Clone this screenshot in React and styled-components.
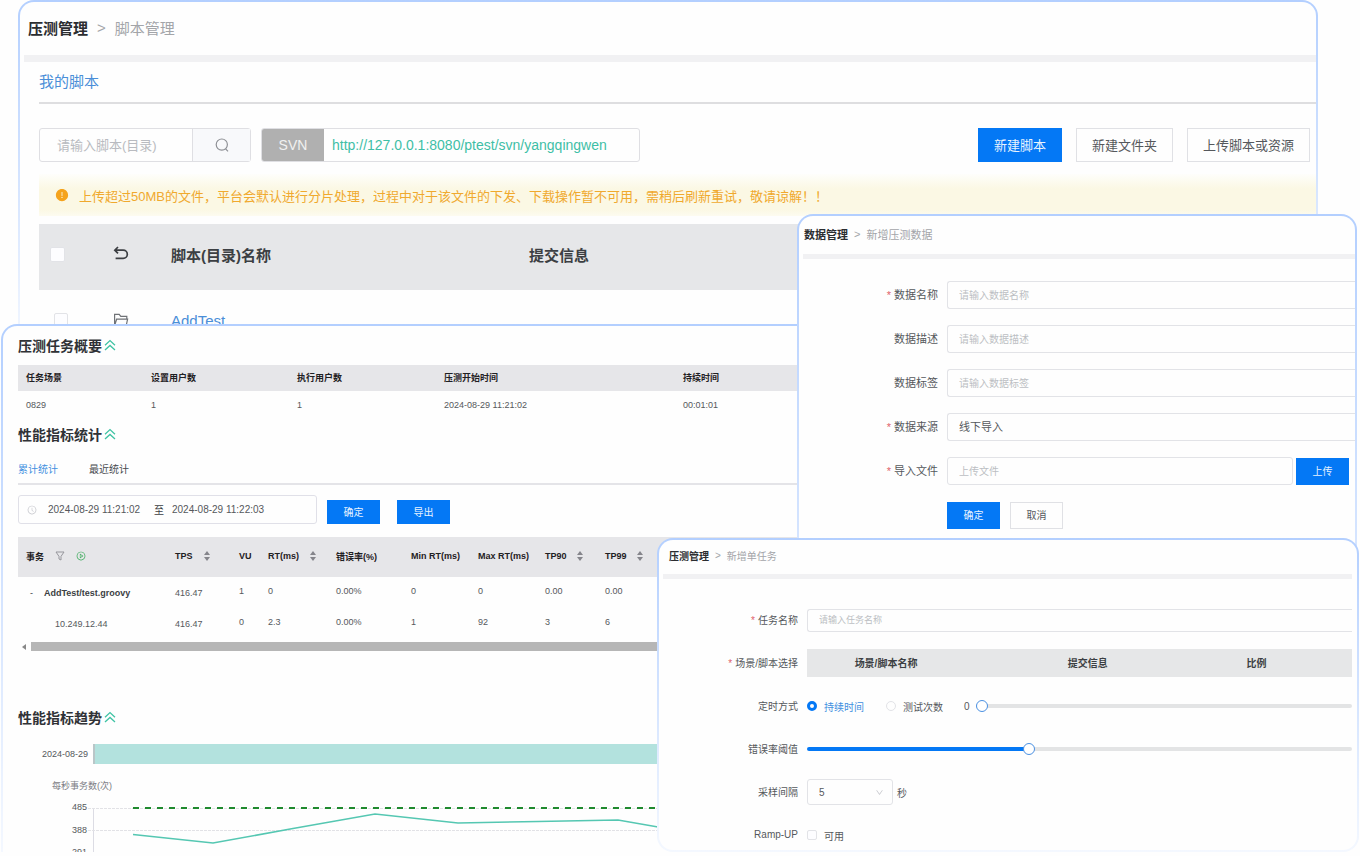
import React, { useState } from 'react'
import styled, { createGlobalStyle } from 'styled-components'
import {
    AiFillExclamationCircle,
    AiOutlineClockCircle,
    AiOutlineDown,
    AiOutlinePlayCircle,
} from 'react-icons/ai'

const summary = [
    { title: '任务场景', value: '0829', width: 125 },
    { title: '设置用户数', value: '1', width: 146 },
    { title: '执行用户数', value: '1', width: 147 },
    { title: '压测开始时间', value: '2024-08-29 11:21:02', width: 239 },
    { title: '持续时间', value: '00:01:01' },
]

const metricColumns = [
    { title: 'TPS', width: 64, sort: 11 },
    { title: 'VU', width: 29 },
    { title: 'RT(ms)', width: 68, sort: 11 },
    { title: '错误率(%)', width: 75 },
    { title: 'Min RT(ms)', width: 67 },
    { title: 'Max RT(ms)', width: 67 },
    { title: 'TP90', width: 60, sort: 10 },
    { title: 'TP99', sort: 10 },
]

const metricRows = [
    { name: 'AddTest/test.groovy', parent: true, values: ['416.47', '1', '0', '0.00%', '0', '0', '0.00', '0.00'] },
    { name: '10.249.12.44', values: ['416.47', '0', '2.3', '0.00%', '1', '92', '3', '6'] },
]

export default function App() {
    return (
        <>
            <GlobalStyle />
            <Stage>
                <ScriptPanel />
                <ReportPanel />
                <DataPanel />
                <TaskPanel />
            </Stage>
        </>
    )
}

function ScriptPanel() {
    return (
        <ScriptWindow>
            <Crumbs $size={15} $height={53} $pad={8}>
                <strong>压测管理</strong>
                <span>&gt;</span>
                <em>脚本管理</em>
            </Crumbs>
            <Band $height={7} />
            <ScriptTitle>
                <a href="#scripts">我的脚本</a>
            </ScriptTitle>
            <Toolbar>
                <SearchBox>
                    <input aria-label="脚本" placeholder="请输入脚本(目录)" />
                    <button type="button" aria-label="搜索">
                        <SearchIcon />
                    </button>
                </SearchBox>
                <SvnBox>
                    <label htmlFor="svn">SVN</label>
                    <input id="svn" defaultValue="http://127.0.0.1:8080/ptest/svn/yangqingwen" />
                </SvnBox>
                <ToolbarActions>
                    <Button $primary $large>新建脚本</Button>
                    <Button $large>新建文件夹</Button>
                    <Button $large>上传脚本或资源</Button>
                </ToolbarActions>
            </Toolbar>
            <Notice>
                <AiFillExclamationCircle />
                上传超过50MB的文件，平台会默认进行分片处理，过程中对于该文件的下发、下载操作暂不可用，需稍后刷新重试，敬请谅解！！
            </Notice>
            <ScriptTable>
                <colgroup>
                    <col width="74" />
                    <col width="58" />
                    <col width="358" />
                    <col />
                </colgroup>
                <thead>
                    <tr>
                        <th><CheckBox aria-label="全选" $size={15} /></th>
                        <th><BackIcon /></th>
                        <th>脚本(目录)名称</th>
                        <th>提交信息</th>
                    </tr>
                </thead>
                <tbody>
                    <tr>
                        <td><CheckBox aria-label="选择 AddTest" $size={14} /></td>
                        <td><FolderIcon /></td>
                        <td><a href="#addtest">AddTest</a></td>
                        <td />
                    </tr>
                </tbody>
            </ScriptTable>
        </ScriptWindow>
    )
}

function ReportPanel() {
    return (
        <ReportWindow>
            <SectionTitle $height={39}>压测任务概要 <CollapseIcon /></SectionTitle>
            <ReportTable $head={26} $row={28}>
                <colgroup>
                    {summary.map((c) => <col key={c.title} width={c.width} />)}
                </colgroup>
                <thead>
                    <tr>{summary.map((c) => <th key={c.title}>{c.title}</th>)}</tr>
                </thead>
                <tbody>
                    <tr>{summary.map((c) => <td key={c.title}>{c.value}</td>)}</tr>
                </tbody>
            </ReportTable>
            <SectionTitle $height={32}>性能指标统计 <CollapseIcon /></SectionTitle>
            <Tabs>
                <Tab type="button" $active>累计统计</Tab>
                <Tab type="button">最近统计</Tab>
            </Tabs>
            <FilterRow>
                <DateRange>
                    <AiOutlineClockCircle />
                    <input aria-label="开始时间" defaultValue="2024-08-29 11:21:02" />
                    <span>至</span>
                    <input aria-label="结束时间" defaultValue="2024-08-29 11:22:03" />
                </DateRange>
                <Button $primary $short>确定</Button>
                <Button $primary $short $spaced>导出</Button>
            </FilterRow>
            <ReportTable $head={40} $row={31}>
                <colgroup>
                    <col width="149" />
                    {metricColumns.map((c) => <col key={c.title} width={c.width} />)}
                </colgroup>
                <thead>
                    <tr>
                        <th>
                            <HeadCell $gap={11}>
                                事务
                                <FilterIcon />
                                <AiOutlinePlayCircle size={10} color="#3dab5c" />
                            </HeadCell>
                        </th>
                        {metricColumns.map((c) => (
                            <th key={c.title}>
                                <HeadCell $gap={c.sort}>
                                    {c.title}
                                    {c.sort && <SortIcon />}
                                </HeadCell>
                            </th>
                        ))}
                    </tr>
                </thead>
                <tbody>
                    {metricRows.map((row) => (
                        <tr key={row.name}>
                            <NameCell $parent={row.parent}>
                                {row.parent && <button type="button">-</button>}
                                {row.name}
                            </NameCell>
                            {row.values.map((v, i) => (
                                <MetricCell key={metricColumns[i].title} $low={i === 0}>{v}</MetricCell>
                            ))}
                        </tr>
                    ))}
                </tbody>
            </ReportTable>
            <ScrollBar>
                <svg width="4" height="6" viewBox="0 0 4 6"><path d="M4 0v6L0 3z" fill="#888" /></svg>
                <i />
            </ScrollBar>
            <TrendTitle $height={32}>性能指标趋势 <CollapseIcon /></TrendTitle>
            <Timeline>
                <span>2024-08-29</span>
                <i />
            </Timeline>
            <TrendChart />
        </ReportWindow>
    )
}

function DataPanel() {
    return (
        <DataWindow>
            <Crumbs $size={11} $height={38} $pad={5}>
                <strong>数据管理</strong>
                <span>&gt;</span>
                <em>新增压测数据</em>
            </Crumbs>
            <Band $height={5} />
            <Form $size={11} $top={22} $gap={16}>
                <Label htmlFor="dataName" $required>数据名称</Label>
                <Input id="dataName" placeholder="请输入数据名称" />
                <Label htmlFor="dataDesc">数据描述</Label>
                <Input id="dataDesc" placeholder="请输入数据描述" />
                <Label htmlFor="dataTag">数据标签</Label>
                <Input id="dataTag" placeholder="请输入数据标签" />
                <Label htmlFor="dataSource" $required>数据来源</Label>
                <WideSelect id="dataSource">
                    <option>线下导入</option>
                </WideSelect>
                <Label htmlFor="dataFile" $required>导入文件</Label>
                <UploadRow>
                    <Input id="dataFile" placeholder="上传文件" $closed />
                    <Button type="button" $primary>上传</Button>
                </UploadRow>
                <span />
                <FormActions>
                    <Button type="button" $primary>确定</Button>
                    <Button type="button">取消</Button>
                </FormActions>
            </Form>
        </DataWindow>
    )
}

function TaskPanel() {
    const [duration, setDuration] = useState(0)
    const [errorRate, setErrorRate] = useState(40.5)

    return (
        <TaskWindow>
            <Crumbs $size={10} $height={34} $pad={10}>
                <strong>压测管理</strong>
                <span>&gt;</span>
                <em>新增单任务</em>
            </Crumbs>
            <Band $height={5} $right={5} />
            <Form $size={10} $top={27} $gap={15} $right={5}>
                <Label htmlFor="taskName" $required>任务名称</Label>
                <Input id="taskName" placeholder="请输入任务名称" $thin />
                <Label as="span" $required>场景/脚本选择</Label>
                <SceneTable>
                    <colgroup>
                        <col width="29%" />
                        <col width="45%" />
                        <col width="17%" />
                        <col />
                    </colgroup>
                    <thead>
                        <tr>
                            <th>场景/脚本名称</th>
                            <th>提交信息</th>
                            <th>比例</th>
                            <th />
                        </tr>
                    </thead>
                </SceneTable>
                <Label as="span">定时方式</Label>
                <TimingRow>
                    <Choice $active>
                        <Radio name="timing" defaultChecked />
                        持续时间
                    </Choice>
                    <Choice>
                        <Radio name="timing" />
                        测试次数
                    </Choice>
                    <output>{duration}</output>
                    <Slider
                        aria-label="持续时间"
                        value={duration}
                        $value={duration}
                        onChange={(e) => setDuration(Number(e.target.value))}
                    />
                </TimingRow>
                <Label htmlFor="errorRate">错误率阈值</Label>
                <Slider
                    id="errorRate"
                    step="0.5"
                    value={errorRate}
                    $value={errorRate}
                    onChange={(e) => setErrorRate(Number(e.target.value))}
                />
                <Label htmlFor="interval">采样间隔</Label>
                <IntervalRow>
                    <SelectBox>
                        <select id="interval">
                            <option>5</option>
                        </select>
                        <AiOutlineDown size={9} />
                    </SelectBox>
                    秒
                </IntervalRow>
                <Label as="span">Ramp-UP</Label>
                <Choice>
                    <CheckBox $size={10} />
                    可用
                </Choice>
            </Form>
        </TaskWindow>
    )
}

function SearchIcon() {
    return (
        <svg width="16" height="16" viewBox="0 0 16 16" fill="none" stroke="currentColor" strokeWidth="1.2">
            <circle cx="7.8" cy="7.6" r="5.6" />
            <path d="m11.6 11.8 2.4 2.6" />
        </svg>
    )
}

function FolderIcon() {
    return (
        <svg width="16" height="16" viewBox="0 0 16 16" fill="none" stroke="#6f7276" strokeWidth="1.2">
            <path d="M1.6 13.6V2.4h4.6l1.6 2h6v2.8M1.6 13.6 3.6 7.2h11l-1.4 6.4z" />
        </svg>
    )
}

function CollapseIcon() {
    return (
        <svg width="12" height="12" viewBox="0 0 12 12" fill="none" stroke="#3fc3a4" strokeWidth="1.3">
            <path d="M1 6.2 6 1.6l5 4.6M1 11 6 6.4 11 11" />
        </svg>
    )
}

function BackIcon() {
    return (
        <svg width="16" height="16" viewBox="0 0 16 16" fill="none" stroke="#3c3f43" strokeWidth="1.7">
            <path d="M5 1 1.8 4.2 5 7.4M2 4.2h8.2a4 4 0 0 1 0 8.2H2.6" />
        </svg>
    )
}

function FilterIcon() {
    return (
        <svg width="10" height="10" viewBox="0 0 10 10" fill="none" stroke="#96969c">
            <path d="M1 1h8L6 5.4V9L4 8V5.4z" />
        </svg>
    )
}

function SortIcon() {
    return (
        <svg width="6" height="10" viewBox="0 0 6 10" fill="#85858b">
            <path d="M3 0 6 4H0zM3 10 0 6h6z" />
        </svg>
    )
}

function TrendChart() {
    return (
        <Chart width="1200" height="120">
            <text x="94" y="25" textAnchor="end" fill="#7d7d85">每秒事务数(次)</text>
            <text x="69" y="46" textAnchor="end">485</text>
            <text x="69" y="69" textAnchor="end">388</text>
            <text x="69" y="91" textAnchor="end">291</text>
            <path d="M75.5 44v76" stroke="#dcdce4" />
            <path d="M70 44.5h1100M70 66.5h1100M70 89.5h1100" stroke="#e2e2e6" strokeDasharray="3 1" />
            <path d="M115 44h1060" stroke="#1f8a2e" strokeWidth="2" strokeDasharray="6 6" />
            <path
                d="M115 70.5 195 79l80-14.5 82-14.5 83 9 80-1.5 80-1.5 80 14 80-6"
                fill="none"
                stroke="#55c7b2"
                strokeWidth="1.6"
            />
        </Chart>
    )
}

const GlobalStyle = createGlobalStyle`
    * {
        box-sizing: border-box;
    }

    body {
        margin: 0;
        background: #fefefe;
        color: #55585c;
        font-family: "Liberation Sans", "Noto Sans CJK SC", sans-serif;
    }

    input,
    select,
    button {
        margin: 0;
        padding: 0;
        border: 0;
        background: none;
        color: inherit;
        font: inherit;
    }

    button {
        cursor: pointer;
    }

    a {
        color: #4a8ed8;
        text-decoration: none;
    }

    svg {
        flex: none;
        display: block;
    }
`

const Stage = styled.main`
    position: relative;
    overflow: hidden;
`

const Panel = styled.section`
    border: 2px solid transparent;
    border-radius: 16px;
    background:
        linear-gradient(#fefefe, #fefefe) padding-box,
        linear-gradient(#b3cfff, #f4f8ff) border-box;
    overflow: hidden;
`

// the four windows overlap, the last one gives the stage its height
const ScriptWindow = styled(Panel)`
    position: absolute;
    top: 0;
    left: 18px;
    right: 42px;
`

const ReportWindow = styled(Panel)`
    position: absolute;
    top: 324px;
    bottom: 0;
    left: 1px;
    right: 40px;
    padding-left: 15px;
    border-bottom: 0;
    border-radius: 16px 16px 0 0;
`

const DataWindow = styled(Panel)`
    position: absolute;
    top: 214px;
    bottom: 20px;
    left: 797px;
    right: 3px;
`

const TaskWindow = styled(Panel)`
    position: relative;
    margin: 538px 1px 0 657px;
`

const Crumbs = styled.nav`
    display: flex;
    align-items: center;
    gap: ${(props) => (props.$size > 12 ? 9 : 6)}px;
    height: ${(props) => props.$height}px;
    padding-left: ${(props) => props.$pad}px;
    padding-bottom: 3px;
    font-size: ${(props) => props.$size}px;
    white-space: nowrap;

    strong {
        color: #2b2d30;
    }

    span,
    em {
        color: #a3a5a9;
        font-style: normal;
    }
`

const Band = styled.div`
    height: ${(props) => props.$height}px;
    margin: 0 ${(props) => props.$right || 0}px 0 4px;
    background: #f1f1f3;
`

const ScriptTitle = styled.h2`
    display: flex;
    align-items: center;
    height: 42px;
    margin: 0 0 0 19px;
    padding-bottom: 3px;
    border-bottom: 2px solid #dedee0;
    font-size: 15px;
    font-weight: 400;
`

const Toolbar = styled.div`
    display: flex;
    gap: 10px;
    padding: 24px 6px 12px 19px;
`

const SearchBox = styled.div`
    display: flex;
    width: 212px;
    height: 34px;
    border: 1px solid #dfdfe3;
    border-radius: 3px;
    font-size: 13px;

    input {
        flex: 1;
        min-width: 0;
        padding-left: 17px;
    }

    input::placeholder {
        color: #b9bbc0;
    }

    button {
        display: grid;
        place-items: center;
        width: 58px;
        border-left: 1px solid #dfdfe3;
        background: #f8f9fb;
        color: #8f9196;
    }
`

const SvnBox = styled.div`
    display: flex;
    width: 379px;
    height: 34px;
    border: 1px solid #dfdfe3;
    border-radius: 3px;
    overflow: hidden;
    font-size: 14px;

    label {
        display: grid;
        place-items: center;
        width: 62px;
        background: #b0b0b0;
        color: #f1f1f1;
    }

    input {
        flex: 1;
        padding-left: 8px;
        color: #3ebfa6;
    }
`

const ToolbarActions = styled.div`
    display: flex;
    gap: 14px;
    margin-left: auto;
`

const Button = styled.button`
    flex: none;
    min-width: 53px;
    height: ${(props) => (props.$large ? 34 : props.$short ? 24 : 27)}px;
    padding: 0 15px 1px;
    margin-left: ${(props) => (props.$spaced ? 7 : 0)}px;
    border: 1px solid ${(props) => (props.$primary ? '#0478f5' : '#e0e1e5')};
    background: ${(props) => (props.$primary ? '#0478f5' : '#fefefe')};
    color: ${(props) => (props.$primary ? '#e8f3ff' : '#55585c')};
    font-size: ${(props) => (props.$large ? 13 : 10)}px;
`

const Notice = styled.p`
    display: flex;
    align-items: center;
    gap: 10px;
    height: 42px;
    margin: 0 0 8px 19px;
    padding-left: 16px;
    background: linear-gradient(#fefefb, #fbf8e4 35%, #fbf8e4 85%, #fdfbf0);
    color: #f0a92e;
    font-size: 13px;
    white-space: nowrap;

    svg {
        font-size: 14px;
        color: #f5a31c;
    }
`

const ScriptTable = styled.table`
    width: calc(100% - 19px);
    margin-left: 19px;
    border-collapse: collapse;
    table-layout: fixed;
    font-size: 15px;
    text-align: left;

    thead {
        background: #e6e7e9;
        color: #3c3f43;
    }

    th,
    td {
        padding: 0;
    }

    th {
        height: 66px;
        padding-bottom: 6px;
    }

    td {
        height: 60px;
    }

    th:first-child {
        padding-left: 11px;
    }

    td:first-child {
        padding-left: 15px;
    }
`

const CheckBox = styled.input.attrs({ type: 'checkbox' })`
    appearance: none;
    display: block;
    width: ${(props) => props.$size}px;
    height: ${(props) => props.$size}px;
    border: 1px solid #e2e3e7;
    border-radius: 2px;
    background: #fdfdff;
`

const SectionTitle = styled.h3`
    display: flex;
    align-items: center;
    gap: 2px;
    height: ${(props) => props.$height}px;
    margin: 0;
    padding-bottom: 2px;
    color: #303236;
    font-size: 14px;
`

const TrendTitle = styled(SectionTitle)`
    margin-top: 50px;
`

const ReportTable = styled.table`
    width: 100%;
    border-collapse: collapse;
    table-layout: fixed;
    font-size: 9px;
    text-align: left;
    white-space: nowrap;

    th {
        height: ${(props) => props.$head}px;
        padding: 0 0 2px 8px;
        background: #e6e6e9;
        color: #1f2023;
    }

    td {
        height: ${(props) => props.$row}px;
        padding: 0 0 0 8px;
    }
`

const HeadCell = styled.span`
    display: flex;
    align-items: center;
    gap: ${(props) => props.$gap || 0}px;
`

const MetricCell = styled.td`
    && {
        padding-bottom: ${(props) => (props.$low ? 0 : 4)}px;
    }
`

const NameCell = styled.td`
    && {
        padding-left: ${(props) => (props.$parent ? 12 : 37)}px;
        color: ${(props) => (props.$parent ? '#3c3f43' : 'inherit')};
        font-weight: ${(props) => (props.$parent ? 700 : 400)};
    }

    button {
        width: 14px;
        font-weight: 400;
        text-align: left;
    }
`

const Tabs = styled.div`
    display: flex;
    gap: 31px;
    height: 34px;
    padding-top: 3px;
    border-bottom: 2px solid #e4e4e8;
`

const Tab = styled.button`
    color: ${(props) => (props.$active ? '#3f8fe0' : '#45484c')};
    font-size: 10px;
`

const FilterRow = styled.div`
    display: flex;
    align-items: flex-end;
    gap: 10px;
    padding: 10px 0 13px;
`

const DateRange = styled.div`
    display: flex;
    align-items: center;
    width: 299px;
    height: 29px;
    padding-left: 8px;
    border: 1px solid #e0e0e8;
    border-radius: 3px;
    font-size: 10px;

    svg {
        margin-right: 11px;
        color: #c5c6cc;
    }

    input {
        width: 98px;
    }

    span {
        padding: 0 8px;
        color: #3c3f43;
    }
`

const ScrollBar = styled.div`
    display: flex;
    align-items: center;
    gap: 5px;
    height: 13px;
    padding: 2px 0 0 4px;

    i {
        flex: 1;
        height: 9px;
        background: #b6b6b6;
    }
`

const Timeline = styled.div`
    display: flex;
    align-items: center;
    gap: 5px;
    height: 30px;
    padding-top: 10px;
    font-size: 9px;

    span {
        width: 70px;
        text-align: right;
    }

    i {
        flex: 1;
        height: 20px;
        border-left: 2px solid #b9c6c8;
        background: #b3e2de;
    }
`

const Chart = styled.svg`
    font-size: 9px;
    fill: #55585c;
`

const Form = styled.form`
    display: grid;
    grid-template-columns: 139px 1fr;
    grid-auto-rows: 28px;
    align-items: center;
    gap: ${(props) => props.$gap}px 9px;
    padding: ${(props) => props.$top}px ${(props) => props.$right || 0}px 1px 0;
    font-size: ${(props) => props.$size}px;
`

const Label = styled.label`
    padding-bottom: 2px;
    text-align: right;

    &::before {
        content: '${(props) => (props.$required ? '*' : '')}';
        margin-right: 3px;
        color: #e0616b;
    }
`

const Input = styled.input`
    width: 100%;
    min-width: 0;
    height: ${(props) => (props.$thin ? 23 : 28)}px;
    padding-left: 11px;
    border: 1px solid #e2e3e7;
    border-right-width: ${(props) => (props.$closed ? 1 : 0)}px;
    border-radius: ${(props) => (props.$closed ? '3px' : '3px 0 0 3px')};
    font-size: ${(props) => (props.$thin ? 9 : 10)}px;

    &::placeholder {
        color: #bcbec3;
    }
`

const WideSelect = styled.select`
    appearance: none;
    width: 100%;
    height: 28px;
    padding-left: 11px;
    border: 1px solid #e2e3e7;
    border-right: 0;
    border-radius: 3px 0 0 3px;
`

const UploadRow = styled.div`
    display: flex;
    align-items: center;
    gap: 3px;
    padding-right: 6px;
`

const FormActions = styled.div`
    display: flex;
    gap: 10px;
`

const SceneTable = styled.table`
    width: 100%;
    height: 28px;
    border-collapse: collapse;
    table-layout: fixed;
    background: #e6e7e8;
    color: #3c3f43;

    th {
        padding: 0 0 2px;
    }
`

const TimingRow = styled.div`
    display: flex;
    align-items: center;

    label + label {
        margin-left: 22px;
    }

    output {
        margin: 0 6px 0 21px;
    }
`

const Choice = styled.label`
    display: flex;
    align-items: center;
    gap: 7px;
    color: ${(props) => (props.$active ? '#3f8fe0' : 'inherit')};
    white-space: nowrap;
`

const Radio = styled.input.attrs({ type: 'radio' })`
    appearance: none;
    width: 10px;
    height: 10px;
    border: 1px solid #e2e3e7;
    border-radius: 50%;

    &:checked {
        border: 3px solid #0478f5;
    }
`

const Slider = styled.input.attrs({ type: 'range' })`
    appearance: none;
    flex: 1;
    width: 100%;
    min-width: 0;
    height: 4px;
    border-radius: 2px;
    background: linear-gradient(to right, #0478f5 ${(props) => props.$value}%, #e3e4e5 0);

    &::-webkit-slider-thumb {
        appearance: none;
        width: 12px;
        height: 12px;
        border: 1px solid #4a90e2;
        border-radius: 50%;
        background: #fff;
    }
`

const IntervalRow = styled.div`
    display: flex;
    align-items: center;
    gap: 4px;
`

const SelectBox = styled.div`
    display: flex;
    align-items: center;
    width: 86px;
    height: 26px;
    padding-right: 8px;
    border: 1px solid #e2e3e7;
    border-radius: 3px;
    color: #c5c6cc;

    select {
        appearance: none;
        flex: 1;
        padding-left: 11px;
        color: #55585c;
    }
`
